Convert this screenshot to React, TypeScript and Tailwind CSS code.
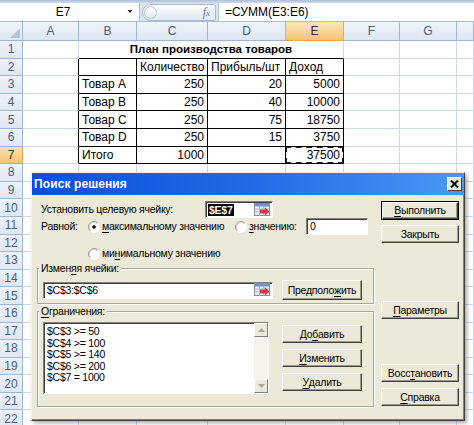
import React from "react";

const GRID_COLS = "grid grid-cols-[23px_56px_58px_71px_78px_58px_56px_57px_1fr]";

function RefIcon() {
  return (
    <svg width="17" height="14" viewBox="0 0 17 14" className="shrink-0">
      <rect x="0.5" y="0.5" width="15" height="12" fill="#e8eef8" stroke="#7d8fab" />
      <rect x="1" y="1" width="14" height="2.5" fill="#6f93cf" />
      <line x1="1" y1="6" x2="15" y2="6" stroke="#a9b9d3" />
      <line x1="1" y1="9" x2="15" y2="9" stroke="#a9b9d3" />
      <line x1="5.5" y1="3.5" x2="5.5" y2="12.5" stroke="#a9b9d3" />
      <line x1="10" y1="3.5" x2="10" y2="12.5" stroke="#a9b9d3" />
      <path d="M6 6.5 L11 6.5 L11 4.5 L15.5 8.5 L11 12.5 L11 10.5 L6 10.5 Z" fill="#e2323c" />
    </svg>
  );
}

function Radio({ checked }: { checked?: boolean }) {
  return (
    <svg width="12" height="12" viewBox="0 0 12 12" className="shrink-0">
      <circle cx="6" cy="6" r="5.5" fill="#fff" />
      <path d="M2.1 9.9 A5.5 5.5 0 0 1 9.9 2.1" stroke="#9a9a9a" fill="none" />
      <path d="M9.9 2.1 A5.5 5.5 0 0 1 2.1 9.9" stroke="#ffffff" fill="none" />
      <path d="M2.8 9.2 A4.5 4.5 0 0 1 9.2 2.8" stroke="#d0d0d0" fill="none" />
      {checked && <circle cx="6" cy="6" r="1.8" fill="#000" />}
    </svg>
  );
}

function Btn({
  children,
  className,
}: {
  children: React.ReactNode;
  className: string;
}) {
  return (
    <div
      className={
        "flex items-center justify-center whitespace-nowrap bg-[#ece9d8] border border-t-white border-l-white border-r-[#404040] border-b-[#404040] shadow-[inset_-1px_-1px_0_#9d9a8c] " +
        className
      }
    >
      {children}
    </div>
  );
}

function U({ children }: { children: React.ReactNode }) {
  return <span className="underline underline-offset-2">{children}</span>;
}

function FormulaBar() {
  return (
    <div className="h-[22px] flex flex-col">
      <div className="h-[3px] bg-linear-to-b from-[#aebfd6] to-[#cfdbeb]" />
      <div className="flex-1 flex items-stretch bg-[#dbe5f2] border-b border-[#a9bcd4]">
        <div className="w-[140px] bg-white flex items-center border-r border-[#b4c3d6]">
          <span className="flex-1 text-center text-[12px] leading-none pl-[2px]">E7</span>
          <svg width="14" height="8" viewBox="0 0 14 8" className="mr-[1px]">
            <path d="M3.5 2 L8.5 2 L6 5 Z" fill="#222" />
          </svg>
        </div>
        <div className="w-[78px] flex items-center pl-[2px]">
          <div className="h-[17px] w-[74px] flex items-center justify-between rounded-l-[9px] rounded-r-[2px] border border-[#a9bad0] bg-linear-to-b from-[#ffffff] to-[#dfe7f1] pr-[5px]">
            <div className="w-[13px] h-[13px] rounded-full border border-[#b8c6d8] bg-linear-to-b from-[#ffffff] to-[#e2e9f2] ml-[1px]" />
            <span className="text-[12px] italic text-[#6c7a8c] font-['Liberation_Serif',serif] leading-none">
              f<span className="text-[9px]">x</span>
            </span>
          </div>
        </div>
        <div className="flex-1 bg-white pl-[6px] text-[12px] flex items-center border-l border-[#b4c3d6]">
          =СУММ(E3:E6)
        </div>
      </div>
    </div>
  );
}

type Row = { b?: string; c?: string; d?: string; e?: string };
const DATA: Record<number, Row> = {
  2: { b: "", c: "Количество", d: "Прибыль/шт", e: "Доход" },
  3: { b: "Товар A", c: "250", d: "20", e: "5000" },
  4: { b: "Товар B", c: "250", d: "40", e: "10000" },
  5: { b: "Товар C", c: "250", d: "75", e: "18750" },
  6: { b: "Товар D", c: "250", d: "15", e: "3750" },
  7: { b: "Итого", c: "1000", d: "", e: "37500" },
};

function cellBorders(r: number, c: number) {
  const right = r >= 2 && r <= 7 && c >= 1 && c <= 5;
  const bottom = r >= 1 && r <= 7 && c >= 2 && c <= 5;
  return (
    "border-r border-b " +
    (right ? "border-r-black " : "border-r-[#d0d7e5] ") +
    (bottom ? "border-b-black" : "border-b-[#d0d7e5]")
  );
}

function Sheet() {
  const rows = Array.from({ length: 22 }, (_, i) => i + 1);
  const letters = ["A", "B", "C", "D", "E", "F", "G", ""];
  return (
    <div className="text-[12px]">
      <div className={GRID_COLS + " h-[19px]"}>
        <div className="relative border-r border-b border-[#9eb6ce] bg-linear-to-b from-[#f1f5fb] to-[#dce6f2]">
          <svg width="10" height="10" viewBox="0 0 10 10" className="absolute right-[2px] bottom-[2px]">
            <path d="M10 0 L10 10 L0 10 Z" fill="#b4c3d7" />
          </svg>
        </div>
        {letters.map((l, i) => (
          <div
            key={i}
            className={
              i === 4
                ? "flex items-center justify-center border-r border-b border-[#f2a544] bg-linear-to-b from-[#fbe6bd] to-[#f6c46d] text-[#333]"
                : "flex items-center justify-center border-r border-b border-[#9eb6ce] bg-linear-to-b from-[#f1f5fb] to-[#dce6f2] text-[#4c607a]"
            }
          >
            {l}
          </div>
        ))}
      </div>
      <div className={GRID_COLS + " auto-rows-[17.6px]"}>
        {rows.map((r) => {
          const d = DATA[r] || {};
          const vals = [d.b, d.c, d.d, d.e];
          return (
            <React.Fragment key={r}>
              <div
                className={
                  r === 7
                    ? "flex items-center justify-center border-r border-b border-[#f2a544] bg-linear-to-b from-[#fbe3b5] to-[#f5c36c] text-[#333]"
                    : "flex items-center justify-center border-r border-b border-[#9eb6ce] bg-linear-to-b from-[#eef3fa] to-[#dfe7f2] text-[#4c607a]"
                }
              >
                {r}
              </div>
              <div className={cellBorders(r, 1)} />
              {r === 1 ? (
                <div className="col-span-4 flex items-center justify-center font-bold text-[11.5px] border-b border-b-black border-r border-r-[#d0d7e5]">
                  План производства товаров
                </div>
              ) : (
                vals.map((v, i) => {
                  const c = i + 2;
                  const right = r >= 3 && c >= 3;
                  return (
                    <div
                      key={c}
                      className={
                        "relative flex items-center px-[3px] whitespace-nowrap overflow-hidden " +
                        (right ? "justify-end " : "justify-start ") +
                        cellBorders(r, c)
                      }
                    >
                      {v}
                      {r === 7 && c === 5 && (
                        <div className="absolute inset-[-1px] border-2 border-dashed border-[#222]" />
                      )}
                    </div>
                  );
                })
              )}
              <div className={cellBorders(r, 6)} />
              <div className={cellBorders(r, 7)} />
              <div className={cellBorders(r, 8)} />
            </React.Fragment>
          );
        })}
      </div>
    </div>
  );
}

const SUNKEN =
  "bg-white border border-t-[#808080] border-l-[#808080] border-r-white border-b-white shadow-[inset_1px_1px_0_#404040]";

function Dialog() {
  return (
    <div className="absolute left-[31px] top-[172px] w-[434px] h-[249px] bg-[#ece9d8] border border-t-[#f4f3ee] border-l-[#f4f3ee] border-r-[#404040] border-b-[#404040] shadow-[inset_-1px_-1px_0_#808080,2px_2px_4px_rgba(0,0,0,0.35)] flex flex-col text-[10.5px] tracking-[-0.25px] leading-[13px] text-black">
      <div className="h-[22px] shrink-0 flex items-center justify-between bg-linear-to-r from-[#0a4fd6] via-[#1f6ae6] to-[#4a98f5] pl-[2px] pr-[2px]">
        <span className="text-white font-bold text-[12px] tracking-[0.1px]">Поиск решения</span>
        <div className="w-[15px] h-[14px] flex items-center justify-center bg-[#ece9d8] border border-t-white border-l-white border-r-[#404040] border-b-[#404040]">
          <svg width="9" height="8" viewBox="0 0 9 8">
            <path d="M1 0.5 L8 7.5 M8 0.5 L1 7.5" stroke="#000" strokeWidth="2" />
          </svg>
        </div>
      </div>
      <div className="flex-1 flex">
        <div className="w-[349px] flex flex-col whitespace-nowrap">
          <div className="mt-[6px] h-[17px] flex items-center pl-[9px]">
            <span className="w-[164px]">Установить целевую ячейку:</span>
            <div className={"w-[68px] h-[17px] flex items-center justify-between pl-[2px] pr-[1px] " + SUNKEN}>
              <span className="bg-black text-white font-bold px-[1px] leading-[12px]">$E$7</span>
              <RefIcon />
            </div>
          </div>
          <div className="h-[17px] flex items-center pl-[9px]">
            <span className="w-[47px]">Равной:</span>
            <div className="w-[147px] flex items-center gap-[2px]">
              <Radio checked />
              <span>
                <U>м</U>аксимальному значению
              </span>
            </div>
            <div className="w-[71px] flex items-center gap-[2px]">
              <Radio />
              <span>
                <U>з</U>начению:
              </span>
            </div>
            <div className={"w-[62px] h-[17px] flex items-center pl-[3px] " + SUNKEN}>0</div>
          </div>
          <div className="mt-[12px] h-[13px] flex items-center pl-[56px] gap-[2px]">
            <Radio />
            <span>
              ми<U>н</U>имальному значению
            </span>
          </div>
          <fieldset className="mt-[2px] ml-[5px] w-[337px] border border-[#aca899] shadow-[inset_1px_1px_0_#fff,1px_1px_0_#fff] pb-[3px]">
            <legend className="ml-[1px] px-[2px] bg-[#ece9d8] leading-[13px]">
              Измен<U>я</U>я ячейки:
            </legend>
            <div className="mt-[5px] flex items-center">
              <div className={"ml-[5px] w-[230px] h-[17px] flex items-center justify-between pl-[3px] pr-[1px] " + SUNKEN}>
                <span>$C$3:$C$6</span>
                <RefIcon />
              </div>
              <Btn className="ml-[9px] w-[80px] h-[20px]">
                Предполо<U>ж</U>ить
              </Btn>
            </div>
          </fieldset>
          <fieldset className="mt-[1px] ml-[5px] w-[337px] border border-[#aca899] shadow-[inset_1px_1px_0_#fff,1px_1px_0_#fff] pb-[12px]">
            <legend className="ml-[1px] px-[2px] bg-[#ece9d8] leading-[13px]">
              <U>О</U>граничения:
            </legend>
            <div className="mt-[4px] flex items-start">
              <div className={"ml-[5px] w-[226px] h-[72px] flex " + SUNKEN}>
                <div className="flex-1 pl-[3px] pt-[3px] leading-[11.5px]">
                  <div>$C$3 &gt;= 50</div>
                  <div>$C$4 &gt;= 100</div>
                  <div>$C$5 &gt;= 140</div>
                  <div>$C$6 &gt;= 200</div>
                  <div>$C$7 = 1000</div>
                </div>
                <div className="w-[14px] flex flex-col bg-[#f4f3ee]">
                  <div className="h-[14px] flex items-center justify-center bg-[#ece9d8] border border-t-white border-l-white border-r-[#808080] border-b-[#808080]">
                    <svg width="7" height="4" viewBox="0 0 7 4">
                      <path d="M0 4 L3.5 0 L7 4 Z" fill="#a8a69a" />
                    </svg>
                  </div>
                  <div className="flex-1" />
                  <div className="h-[14px] flex items-center justify-center bg-[#ece9d8] border border-t-white border-l-white border-r-[#808080] border-b-[#808080]">
                    <svg width="7" height="4" viewBox="0 0 7 4">
                      <path d="M0 0 L3.5 4 L7 0 Z" fill="#a8a69a" />
                    </svg>
                  </div>
                </div>
              </div>
              <div className="ml-[13px] mt-[3px] flex flex-col gap-[6px]">
                <Btn className="w-[80px] h-[18px]">
                  До<U>б</U>авить
                </Btn>
                <Btn className="w-[80px] h-[18px]">
                  <U>И</U>зменить
                </Btn>
                <Btn className="w-[80px] h-[18px]">
                  <U>У</U>далить
                </Btn>
              </div>
            </div>
          </fieldset>
        </div>
        <div className="w-[78px] flex flex-col pt-[6px]">
          <div className="h-[19px] flex items-center justify-center bg-[#ece9d8] border border-black shadow-[inset_1px_1px_0_#fff,inset_-1px_-1px_0_#404040,inset_-2px_-2px_0_#9d9a8c]">
            <U>В</U>ыполнить
          </div>
          <Btn className="mt-[5px] h-[18px]">Закрыть</Btn>
          <Btn className="mt-[58px] h-[18px]">
            <U>П</U>араметры
          </Btn>
          <Btn className="mt-[45px] h-[18px]">
            Восс<U>т</U>ановить
          </Btn>
          <Btn className="mt-[6px] h-[18px]">
            <U>С</U>правка
          </Btn>
        </div>
      </div>
    </div>
  );
}

export default function App() {
  return (
    <div className="relative w-[474px] h-[425px] overflow-hidden bg-white font-['Liberation_Sans',Arial,sans-serif] text-black">
      <FormulaBar />
      <Sheet />
      <Dialog />
    </div>
  );
}
